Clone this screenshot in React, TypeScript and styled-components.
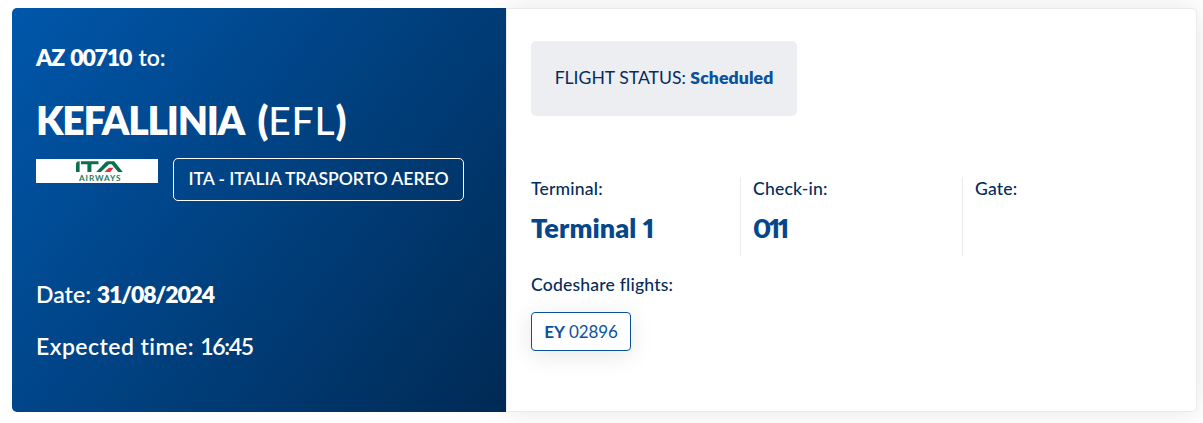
import React from "react";
import styled, { createGlobalStyle } from "styled-components";

const GlobalStyle = createGlobalStyle`
  * { box-sizing: border-box; }
  body {
    margin: 0;
    background: #fff;
    color: #042c5c;
    font-family: "Lato", "Open Sans", sans-serif;
    font-variant-ligatures: none;
    overflow: hidden;
  }
`;

const Card = styled.article`
  display: flex;
  width: 1185px;
  height: 404px;
  margin: 8px 6px 11px 12px;
`;

const Summary = styled.section`
  display: flex;
  flex-direction: column;
  width: 494px;
  padding: 35px 24px 0;
  border-radius: 5px 0 0 5px;
  color: #fff;
  background: linear-gradient(127deg, #0057ab 0%, #002a54 100%);
  z-index: 1;
`;

const FlightLine = styled.p<{ $spacing?: number }>`
  margin: 0;
  font-size: 23px;
  font-weight: 600;
  line-height: 29px;
  white-space: nowrap;
  letter-spacing: ${(p) => p.$spacing ?? 0}px;
`;

const Strong = styled.strong`
  font-weight: 800;
  letter-spacing: -1.15px;
  word-spacing: 2px;
  margin-right: 1.5px;
`;

const Time = styled.span`
  letter-spacing: -1.3px;
`;

const Destination = styled.h1`
  margin: 24px 0 0;
  font-size: 39px;
  font-weight: 800;
  line-height: 48px;
  white-space: nowrap;
  letter-spacing: -1.25px;
`;

const AirportCode = styled.span`
  margin-left: 7px;
  letter-spacing: -0.3px;
`;

const CodeLetters = styled.span`
  font-weight: 500;
  letter-spacing: 0.9px;
`;

const Carrier = styled.div`
  display: flex;
  align-items: flex-start;
  gap: 15px;
  margin-top: 14px;
`;

const Logo = styled.svg`
  display: block;
  flex: none;
  margin-top: 1px;
  background: #fff;
`;

const CarrierName = styled.span`
  display: flex;
  align-items: center;
  justify-content: center;
  width: 291px;
  height: 43px;
  padding-bottom: 2px;
  border: 1px solid #fff;
  border-radius: 5px;
  font-size: 17.6px;
  font-weight: 600;
  letter-spacing: -0.05px;
  white-space: nowrap;
`;

const Schedule = styled.div`
  display: flex;
  flex-direction: column;
  gap: 23px;
  margin-top: 79px;
`;

const Details = styled.section`
  width: 691px;
  padding: 32px 0 0 24px;
  border: 1px solid #ebebec;
  border-radius: 0 5px 5px 0;
  background: #fff;
  box-shadow: 0 0 30px rgba(0, 0, 0, 0.1);
`;

const Status = styled.div`
  display: flex;
  align-items: center;
  justify-content: center;
  width: 266px;
  height: 75px;
  padding-bottom: 2px;
  border-radius: 5px;
  background: #edeef2;
  font-size: 17.6px;
  white-space: pre;
`;

const StatusValue = styled.strong`
  color: #0b529c;
  font-weight: 800;
  letter-spacing: 0.1px;
`;

const Facts = styled.dl`
  display: grid;
  grid-template-columns: 209px 222px 222px;
  height: 79px;
  margin: 61px 0 0;
`;

const Fact = styled.div<{ $divided?: boolean }>`
  padding-left: ${(p) => (p.$divided ? 12 : 0)}px;
  border-left: ${(p) => (p.$divided ? "1px solid #ebecef" : "0")};
`;

const Label = styled.dt`
  font-size: 17.6px;
  font-weight: 500;
  line-height: 23px;
  letter-spacing: 0.18px;
`;

const Value = styled.dd<{ $spacing?: number }>`
  margin: 11px 0 0;
  color: #06478a;
  font-size: 27px;
  font-weight: 800;
  line-height: 34px;
  letter-spacing: ${(p) => p.$spacing ?? 0}px;
  font-variant-numeric: proportional-nums;
`;

const Codeshare = styled.dl`
  margin: 17px 0 0;
`;

const FlightChip = styled.dd`
  display: flex;
  align-items: center;
  justify-content: center;
  width: 100px;
  height: 39px;
  margin: 16px 0 0;
  padding-bottom: 1px;
  border: 1px solid #0b529c;
  border-radius: 4px;
  color: #0b529c;
  background: #fff;
  box-shadow: 0 4px 24px rgba(0, 0, 0, 0.1);
  font-size: 17px;
  letter-spacing: -0.15px;
  white-space: pre;
`;

function ItaLogo() {
  return (
    <Logo width="122" height="24" viewBox="0 0 122 24" role="img" aria-label="ITA Airways">
      <path d="M40 13V5.5Q40 2.2 43.6 2.2V13Z" fill="#08704a" />
      <path d="M45 2.2H62.5V5.3H55.4V13H51.4V5.3H45Z" fill="#08704a" />
      <path d="M60.2 13L69.5 3.3Q70.6 2.2 72.3 2.2H78.1L86.8 13H82.1L75.7 5.3H73L64.9 13Z" fill="#08704a" />
      <path d="M68.4 13L72.9 8.8H77.4L74.3 13Z" fill="#d9343b" />
      <text x="43" y="22" textLength="41.5" fontFamily="Lato, sans-serif" fontSize="8.2" fontWeight="700" fill="#287c60">
        AIRWAYS
      </text>
    </Logo>
  );
}

export default function App() {
  return (
    <>
      <GlobalStyle />
      <Card>
        <Summary>
          <FlightLine><Strong>AZ 00710</Strong> to:</FlightLine>
          <Destination>
            KEFALLINIA <AirportCode>(<CodeLetters>EFL</CodeLetters>)</AirportCode>
          </Destination>
          <Carrier>
            <ItaLogo />
            <CarrierName>ITA - ITALIA TRASPORTO AEREO</CarrierName>
          </Carrier>
          <Schedule>
            <FlightLine>Date: <Strong>31/08/2024</Strong></FlightLine>
            <FlightLine $spacing={0.45}>Expected time: <Time>16:45</Time></FlightLine>
          </Schedule>
        </Summary>
        <Details>
          <Status>FLIGHT STATUS: <StatusValue>Scheduled</StatusValue></Status>
          <Facts>
            <Fact>
              <Label>Terminal:</Label>
              <Value $spacing={0.1}>Terminal 1</Value>
            </Fact>
            <Fact $divided>
              <Label>Check-in:</Label>
              <Value $spacing={-2.4}>011</Value>
            </Fact>
            <Fact $divided>
              <Label>Gate:</Label>
            </Fact>
          </Facts>
          <Codeshare>
            <Label>Codeshare flights:</Label>
            <FlightChip><strong>EY</strong> 02896</FlightChip>
          </Codeshare>
        </Details>
      </Card>
    </>
  );
}
